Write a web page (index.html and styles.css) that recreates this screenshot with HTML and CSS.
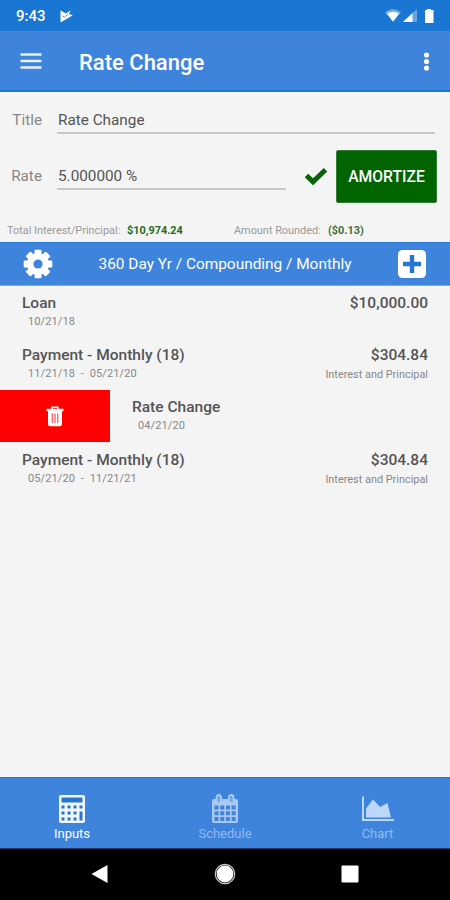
FILE: index.html
```html
<!DOCTYPE html>
<html lang="en">
  <head>
    <meta charset="UTF-8" />
    <meta name="viewport" content="width=device-width, initial-scale=1.0" />
    <title>Rate Change</title>
    <link rel="stylesheet" href="styles.css">
  </head>

  <body>
    <div class="status-bar">
      <span class="clock">9:43</span>
      <svg class="play" viewBox="0 0 13 13" width="13" height="13">
        <path d="M0.5 0.5 L6 3.5 L10.5 0.5 L9 4 L12.8 5.2 L0.5 12.5Z" fill="#fff" />
        <path d="M2.5 5.8 L4.5 7.3 L8 4" fill="none" stroke="#1976d2" stroke-width="0.8" />
      </svg>
      <svg class="signals" viewBox="0 0 50 16" width="50" height="16">
        <path d="M0 4.2 Q8 -1.8 16 4.2 L8 14Z" fill="#fff" opacity="0.4" />
        <path d="M2 5.4 Q8 2 14 5.4 L8 13.5Z" fill="#fff" />
        <path d="M18 14 L32 1 V14Z" fill="#fff" opacity="0.35" />
        <path d="M18 14 L27.5 5 V14Z" fill="#fff" />
        <path d="M40 2 H42 V1 H46 V2 H48.5 V15 H40Z" fill="#fff" />
      </svg>
    </div>

    <header class="app-bar">
      <svg class="menu" viewBox="0 0 22 16" width="22" height="16">
        <path d="M0.5 1.5 H21.5 M0.5 8 H21.5 M0.5 14.5 H21.5" stroke="#e8f1ff" stroke-width="2.4" />
      </svg>
      <h1>Rate Change</h1>
      <svg class="more" viewBox="0 0 6 20" width="6" height="20" fill="#fff">
        <circle cx="2.5" cy="4" r="2.6" />
        <circle cx="2.5" cy="10.5" r="2.6" />
        <circle cx="2.5" cy="17.1" r="2.6" />
      </svg>
    </header>

    <form class="loan-form">
      <div class="field title-field">
        <label for="title">Title</label>
        <input type="text" id="title" value="Rate Change" />
      </div>
      <div class="field rate-field">
        <label for="rate">Rate</label>
        <input type="text" id="rate" value="5.000000 %" />
        <svg class="check" viewBox="0 0 24 18" width="24" height="18">
          <path d="M2.5 8.5 L9 14.8 L21.5 2.7" fill="none" stroke="#056405" stroke-width="5" />
        </svg>
        <button type="button">AMORTIZE</button>
      </div>
      <div class="totals">
        <span class="total">Total Interest/Principal:</span>
        <b class="total-value">$10,974.24</b>
        <span class="rounded">Amount Rounded:</span>
        <b class="rounded-value">($0.13)</b>
      </div>
    </form>

    <div class="settings-bar">
      <svg viewBox="-15 -15 30 30" width="30" height="30" fill="#fff">
        <g id="teeth">
          <rect x="-3.5" y="-14.3" width="7" height="28.6" rx="1" />
          <rect x="-14.3" y="-3.5" width="28.6" height="7" rx="1" />
        </g>
        <use href="#teeth" transform="rotate(45)" />
        <circle r="11" />
        <circle r="4.6" fill="#3f84dc" />
      </svg>
      <span>360 Day Yr / Compounding / Monthly</span>
      <svg viewBox="0 0 30 30" width="30" height="30">
        <rect x="1" y="1" width="28" height="28" rx="4.5" fill="#fff" />
        <path d="M15 6 V24 M6 15 H24" stroke="#2477d2" stroke-width="4.4" />
      </svg>
    </div>

    <main class="events">
      <div class="event">
        <div>
          <div class="name">Loan</div>
          <div class="date">10/21/18</div>
        </div>
        <div class="right">
          <div class="amount">$10,000.00</div>
        </div>
      </div>
      <div class="event">
        <div>
          <div class="name">Payment - Monthly (18)</div>
          <div class="date">11/21/18 &nbsp;-&nbsp; 05/21/20</div>
        </div>
        <div class="right">
          <div class="amount">$304.84</div>
          <div class="kind">Interest and Principal</div>
        </div>
      </div>
      <div class="event swiped">
        <div class="delete">
          <svg viewBox="0 0 18 21" width="18" height="21">
            <path d="M6 3 V1.2 H12 V3" fill="none" stroke="#fff" stroke-width="1.6" />
            <path d="M0.5 2.8 H17.5 V5.2 H0.5Z M2 5 H16 V18 Q16 20.2 14 20.2 H4 Q2 20.2 2 18Z" fill="#fff" />
            <path d="M6.3 7.5 V17 M9 7.5 V17 M11.7 7.5 V17" stroke="#ff6262" stroke-width="1.3" />
          </svg>
        </div>
        <div>
          <div class="name">Rate Change</div>
          <div class="date">04/21/20</div>
        </div>
      </div>
      <div class="event">
        <div>
          <div class="name">Payment - Monthly (18)</div>
          <div class="date">05/21/20 &nbsp;-&nbsp; 11/21/21</div>
        </div>
        <div class="right">
          <div class="amount">$304.84</div>
          <div class="kind">Interest and Principal</div>
        </div>
      </div>
    </main>

    <nav class="tabs">
      <div class="tab active">
        <svg viewBox="0 0 28 30" width="28" height="30">
          <rect x="1" y="1" width="26" height="28" rx="2" fill="#f2f7ff" />
          <path d="M3.5 3.5 H24.5 V8.5 H3.5Z M3.5 11.5h3v3h-3z M9.5 11.5h3v3h-3z M15.5 11.5h3v3h-3z M21.5 11.5h3v3h-3z M3.5 17.5h3v3h-3z M9.5 17.5h3v3h-3z M15.5 17.5h3v3h-3z M3.5 23.5h3v3h-3z M9.5 23.5h3v3h-3z M15.5 23.5h3v3h-3z M21.5 17.5h3v9h-3z" fill="#2875d0" />
        </svg>
        <span>Inputs</span>
      </div>
      <div class="tab">
        <svg viewBox="0 0 28 30" width="28" height="30">
          <rect x="1" y="5" width="26" height="24" rx="2" fill="#a9c9f3" />
          <rect x="5.5" y="1" width="4.5" height="8" rx="2.2" fill="#6da3e8" stroke="#a9c9f3" stroke-width="1.8" />
          <rect x="18" y="1" width="4.5" height="8" rx="2.2" fill="#6da3e8" stroke="#a9c9f3" stroke-width="1.8" />
          <path d="M3.5 11.5h4v4h-4z M9.2 11.5h4v4h-4z M14.9 11.5h4v4h-4z M20.6 11.5h4v4h-4z M3.5 17.2h4v4h-4z M9.2 17.2h4v4h-4z M14.9 17.2h4v4h-4z M20.6 17.2h4v4h-4z M3.5 22.9h4v4h-4z M9.2 22.9h4v4h-4z M14.9 22.9h4v4h-4z M20.6 22.9h4v4h-4z" fill="#3f84dc" />
        </svg>
        <span>Schedule</span>
      </div>
      <div class="tab">
        <svg viewBox="0 0 34 30" width="34" height="30">
          <path d="M2 2.5 V26 H33" fill="none" stroke="#bdd7fb" stroke-width="2" />
          <path d="M5 23.5 V14.5 L12 5.5 L19 13 L26.5 9 L30 23.5Z" fill="#bdd7fb" />
        </svg>
        <span>Chart</span>
      </div>
    </nav>

    <div class="system-nav">
      <svg viewBox="0 0 17 20" width="17" height="20"><path d="M0.5 10 L16.5 1 V19Z" fill="#fff" /></svg>
      <svg viewBox="0 0 22 22" width="22" height="22">
        <circle cx="11" cy="11" r="9.7" fill="none" stroke="#ccc" stroke-width="1.2" />
        <circle cx="11" cy="11" r="8.4" fill="#fff" />
      </svg>
      <svg viewBox="0 0 18 18" width="18" height="18"><rect x="0.5" y="0.5" width="17" height="17" rx="1" fill="#fff" /></svg>
    </div>
  </body>
</html>
```

FILE: styles.css
```css
* {
  box-sizing: border-box;
}

body {
  display: flex;
  flex-direction: column;
  height: 900px;
  margin: 0;
  background-color: #f4f4f4;
  font-family: Roboto, "Liberation Sans", sans-serif;
  color: #555;
}

svg {
  display: block;
  flex-shrink: 0;
}

.status-bar {
  display: flex;
  align-items: center;
  height: 31px;
  padding: 1px 15px 0 16px;
  background-color: #1976d2;
  color: #fff;
}

.clock {
  width: 44px;
  font-size: 15px;
  font-weight: 500;
}

.signals {
  margin-left: auto;
}

.app-bar {
  display: flex;
  align-items: center;
  height: 61px;
  padding: 1px 20px 0;
  background-color: #3f84dc;
  border-bottom: 2px solid #1976d2;
}

h1 {
  margin: 2px 0 0 37px;
  color: #fff;
  font-size: 22px;
  font-weight: 500;
}

.more {
  margin-left: auto;
}

.loan-form {
  height: 150px;
}

.field {
  display: flex;
  align-items: center;
}

.title-field {
  height: 55px;
  padding: 0 15px 0 0;
}

.rate-field {
  height: 58px;
  padding: 0 13px 0 0;
}

.field label {
  width: 57px;
  padding-right: 15px;
  color: #888;
  font-size: 15.3px;
  text-align: right;
}

.field input {
  flex: 1;
  min-width: 0;
  height: 28px;
  padding: 2px 0 0 1px;
  border: none;
  border-bottom: 2px solid #c8c8c8;
  background: none;
  color: #555;
  font-family: inherit;
  font-size: 15.3px;
}

.check {
  margin: 0 8px 0 18px;
}

.field button {
  width: 101px;
  height: 53px;
  padding: 1px 0 0;
  border: 1px solid #327d32;
  border-radius: 2px;
  background-color: #006400;
  color: #fff;
  font-family: inherit;
  font-size: 15.7px;
  font-weight: 500;
}

.totals {
  display: flex;
  align-items: center;
  height: 37px;
  padding: 14px 0 0 7px;
  font-size: 10.9px;
}

.total {
  width: 120px;
  color: #999;
}

.total-value {
  width: 107px;
  color: #246b24;
}

.rounded {
  width: 94px;
  color: #999;
}

.rounded-value {
  color: #3b713b;
}

.settings-bar {
  display: flex;
  justify-content: space-between;
  align-items: center;
  height: 44px;
  padding: 0 23px;
  border-top: 1px solid #2478d4;
  border-bottom: 1px solid #73adf5;
  background-color: #3f84dc;
  color: #fff;
  font-size: 15.4px;
}

.events {
  flex: 1;
  padding-top: 1px;
}

.event {
  display: flex;
  justify-content: space-between;
  height: 52.2px;
  padding: 6px 22px 0;
}

.name,
.amount {
  height: 20px;
  font-size: 15.5px;
  font-weight: 500;
  line-height: 20px;
}

.date,
.kind {
  height: 18px;
  color: #888;
  font-size: 11px;
  line-height: 18px;
}

.date {
  padding-left: 6px;
  letter-spacing: 0.12px;
}

.kind {
  font-size: 10.9px;
  line-height: 20px;
}

.right {
  text-align: right;
}

.swiped {
  justify-content: flex-start;
  padding-left: 0;
}

.delete {
  display: flex;
  justify-content: center;
  align-items: center;
  width: 110px;
  height: 52px;
  margin: -7px 22px 0 0;
  background-color: #f00;
}

.tabs {
  display: grid;
  grid-template-columns: 144px 162px 143px;
  height: 72px;
  border-top: 1px solid #2478d4;
  border-bottom: 1px solid #173f73;
  background-color: #3f84dc;
}

.tab {
  display: flex;
  flex-direction: column;
  align-items: center;
  padding-top: 16px;
  color: #91b9ef;
  font-size: 13px;
  line-height: 20px;
}

.active {
  color: #fff;
}

.system-nav {
  display: flex;
  justify-content: space-between;
  align-items: center;
  height: 51px;
  padding: 0 91px 2px;
  background-color: #000;
}
```
